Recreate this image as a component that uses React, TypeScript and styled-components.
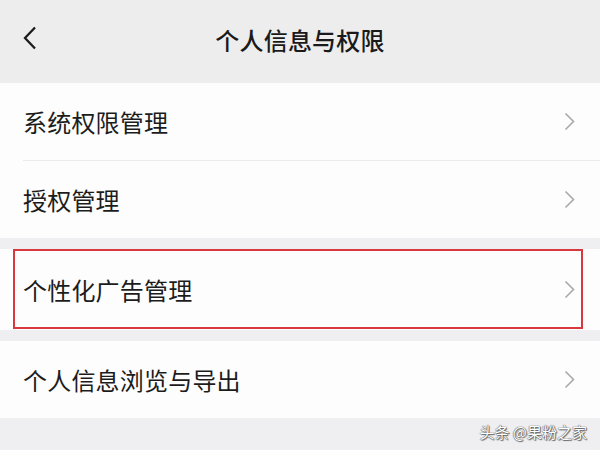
import styled, { createGlobalStyle } from 'styled-components'

const GlobalStyle = createGlobalStyle`
    html, body {
        margin: 0;
        padding: 0;
        background: #efeff1;
    }
    * {
        box-sizing: border-box;
    }
`

const ChevronRight = () => (
    <svg width="11" height="19" viewBox="0 0 11 19">
        <polyline points="1.5,1.5 9.5,9.5 1.5,17.5" fill="none" stroke="#a9a9ab" strokeWidth="1.6" strokeLinejoin="miter" />
    </svg>
)

const BackIcon = () => (
    <svg width="14" height="24" viewBox="0 0 14 24">
        <polyline points="12,1.5 2,12 12,22.5" fill="none" stroke="#1c1c1c" strokeWidth="2.3" />
    </svg>
)

const items = [
    [{ label: '系统权限管理' }, { label: '授权管理' }],
    [{ label: '个性化广告管理', marked: true }],
    [{ label: '个人信息浏览与导出' }],
]

export default function App() {
    return (
        <>
            <GlobalStyle />
            <Page>
                <Header>
                    <Back><BackIcon /></Back>
                    <Title>个人信息与权限</Title>
                    <span />
                </Header>
                {items.map((group, gi) => (
                    <Group key={gi}>
                        {group.map((item, i) => (
                            <Row key={item.label} $divider={i < group.length - 1} $marked={!!item.marked}>
                                <Label>{item.label}</Label>
                                <ChevronRight />
                            </Row>
                        ))}
                    </Group>
                ))}
                <Footer>
                    <Watermark>头条 @果粉之家</Watermark>
                </Footer>
            </Page>
        </>
    )
}

const Page = styled.div`
    width: 600px;
    height: 450px;
    overflow: hidden;
    background: #efeff1;
    font-family: "Noto Sans CJK SC", "Noto Sans", sans-serif;
    display: flex;
    flex-direction: column;
`
const Header = styled.div`
    height: 83px;
    background: #ededed;
    display: grid;
    grid-template-columns: 80px 1fr 80px;
    align-items: center;
    padding-bottom: 8px;
`
const Back = styled.div`
    display: flex;
    align-items: center;
    padding-left: 23px;
    padding-top: 1px;
`
const Title = styled.div`
    text-align: center;
    font-size: 24px;
    font-weight: 500;
    color: #1a1a1a;
    letter-spacing: 0.2px;
    padding-top: 4px;
`
const Group = styled.div`
    background: #fdfdfd;
    margin-bottom: 11px;
`
const Row = styled.div<{ $divider: boolean; $marked: boolean }>`
    position: relative;
    height: ${p => (p.$marked ? '81px' : '77px')};
    display: flex;
    align-items: center;
    justify-content: space-between;
    padding: 0 25px 0 23px;
    margin-bottom: ${p => (p.$divider ? '1px' : '0')};
    &::after {
        content: '';
        display: ${p => (p.$divider ? 'block' : 'none')};
        position: absolute;
        left: 23px;
        right: 0;
        bottom: -1px;
        height: 1px;
        background: #ebebeb;
    }
    &::before {
        content: '';
        display: ${p => (p.$marked ? 'block' : 'none')};
        position: absolute;
        left: 13px;
        right: 17px;
        top: 0;
        bottom: 1px;
        border: 2px solid #d8383e;
    }
`
const Label = styled.span`
    font-size: 24px;
    color: #1c1c1c;
    letter-spacing: 0.2px;
`
const Footer = styled.div`
    flex: 1;
    display: flex;
    justify-content: flex-end;
    padding: 3px 13px 0 0;
    margin-top: -11px;
`
const Watermark = styled.span`
    font-size: 15px;
    color: #ffffff;
    text-shadow: 0 0 1px #4a4a4a, 0 0 1px #4a4a4a, 1px 1px 1px #6a6a6a;
`
